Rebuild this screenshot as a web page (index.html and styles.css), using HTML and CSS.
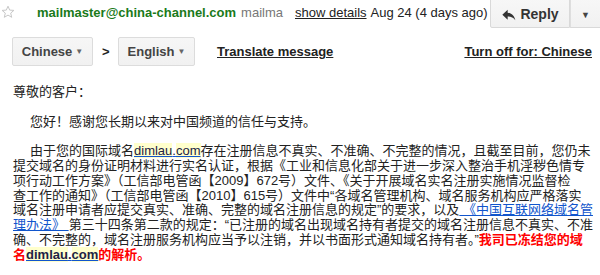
FILE: index.html
```html
<!DOCTYPE html>
<html>
<head>
<meta charset="utf-8">
<link rel="stylesheet" href="styles.css">
</head>
<body>
<div class="head">
  <svg class="star" viewBox="0 0 14 14" width="14" height="14"><path d="M7 1.2 L8.7 5.1 L12.9 5.4 L9.7 8.1 L10.7 12.3 L7 10.1 L3.3 12.3 L4.3 8.1 L1.1 5.4 L5.3 5.1 Z" fill="none" stroke="#c8c8c8" stroke-width="1"/></svg>
  <div class="meta">
    <span class="sender">mailmaster@china-channel.com</span>
    <span class="alias">mailma</span>
    <a class="details">show details</a>
    <span class="date">Aug 24 (4 days ago)</span>
  </div>
  <div class="replygroup">
    <div class="btn reply"><svg class="ricon" viewBox="0 0 24 24" width="16" height="16"><path d="M10 8.5V4l-8 7.5 8 7.5v-4.6c5.2 0 8.7 1.6 11.5 5.3-1-5.3-4.3-10.4-11.5-11.2z" fill="#333"/></svg><span>Reply</span></div>
    <div class="btn more">▼</div>
  </div>
</div>
<div class="tbar">
  <div class="sel sel-zh">Chinese <span class="caret">▼</span></div>
  <span class="gt">&gt;</span>
  <div class="sel sel-en">English <span class="caret">▼</span></div>
  <a class="tlink">Translate message</a>
  <a class="tlink off">Turn off for: Chinese</a>
</div>
<div class="msg">
  <div class="para">
    <div class="ln">尊敬的客户：</div>
  </div>
  <div class="para">
    <div class="ln ind">您好！感谢您长期以来对中国频道的信任与支持。</div>
  </div>
  <div class="para">
    <div class="ln ind">由于您的国际域名<a class="dom"><span class="hl">dimlau</span>.<span class="hl">com</span></a>存在注册信息不真实、不准确、不完整的情况，且截至目前，您仍未</div>
    <div class="ln">提交域名的身份证明材料进行实名认证，根据《工业和信息化部关于进一步深入整治手机淫秽色情专</div>
    <div class="ln">项行动工作方案》（工信部电管函【2009】672号）文件、《关于开展域名实名注册实施情况监督检</div>
    <div class="ln">查工作的通知》（工信部电管函【2010】615号）文件中“各域名管理机构、域名服务机构应严格落实</div>
    <div class="ln">域名注册申请者应提交真实、准确、完整的域名注册信息的规定”的要求，以及<a class="blue"> 《中国互联网络域名管</a></div>
    <div class="ln"><a class="blue">理办法》 </a>第三十四条第二款的规定：“已注册的域名出现域名持有者提交的域名注册信息不真实、不准</div>
    <div class="ln">确、不完整的，域名注册服务机构应当予以注销，并以书面形式通知域名持有者。”<b class="red">我司已冻结您的域</b></div>
    <div class="ln"><b class="red">名<a class="dom"><span class="hl">dimlau</span>.<span class="hl">com</span></a>的解析。</b></div>
  </div>
</div>
</body>
</html>
```
FILE: styles.css
```css
html, body {
  margin: 0;
  padding: 0;
  background: #fff;
  overflow: hidden;
}
body {
  width: 600px;
  height: 275px;
  font-family: "Liberation Sans", Arial, "Noto Sans CJK SC", sans-serif;
  font-size: 13px;
  color: #222;
}
.head {
  display: flex;
  align-items: center;
  height: 28px;
}
.star {
  margin-left: 1px;
  margin-bottom: 5px;
  flex: none;
}
.meta {
  display: flex;
  align-items: baseline;
  white-space: nowrap;
  padding-bottom: 4px;
  margin-left: 22px;
}
.sender {
  font-weight: bold;
  color: #1a7a1a;
}
.alias {
  color: #777;
  margin-left: 5px;
}
.details {
  color: #222;
  text-decoration: underline;
  margin-left: 12px;
}
.date {
  margin-left: 4px;
  color: #222;
}
.replygroup {
  display: flex;
  margin-left: auto;
  margin-right: -4px;
  margin-top: -2px;
  height: 30px;
}
.btn {
  box-sizing: border-box;
  height: 30px;
  display: flex;
  align-items: center;
  justify-content: center;
  border: 1px solid #d9d9d9;
  background: linear-gradient(#f7f7f7, #f1f1f1);
  color: #333;
  font-weight: bold;
}
.reply {
  width: 80px;
  border-radius: 0 0 0 2px;
  padding-top: 2px;
  font-size: 14px;
}
.reply span {
  margin-left: 3px;
}
.ricon {
  margin-top: 1px;
}
.more {
  width: 34px;
  border-left: 1px solid #dedede;
  font-size: 9px;
  padding-top: 3px;
  padding-right: 3px;
  color: #444;
}
.tbar {
  display: flex;
  align-items: center;
  margin-top: 9px;
  padding-left: 12px;
  height: 29px;
}
.sel {
  box-sizing: border-box;
  height: 29px;
  display: flex;
  align-items: center;
  justify-content: center;
  border: 1px solid #dcdcdc;
  border-radius: 2px;
  background: linear-gradient(#f6f6f6, #f1f1f1);
  color: #444;
  font-weight: bold;
  white-space: nowrap;
}
.sel-zh {
  width: 81px;
}
.sel-en {
  width: 77px;
}
.caret {
  font-size: 8px;
  margin-left: 3px;
  color: #666;
}
.gt {
  font-weight: bold;
  color: #222;
  margin: 0 9px 0 9px;
  width: 7px;
}
.tlink {
  font-weight: bold;
  color: #222;
  text-decoration: underline;
  margin-left: 22px;
  white-space: nowrap;
}
.tlink.off {
  margin-left: auto;
  margin-right: 8px;
}
.msg {
  margin-top: 19px;
  padding-left: 13px;
  line-height: 14.8px;
  font-size: 13px;
}
.para {
  margin-bottom: 14.8px;
}
.ln {
  white-space: nowrap;
}
.ln.ind {
  padding-left: 17px;
}
.dom {
  color: #222244;
  text-decoration: underline;
  text-decoration-color: #1155cc;
}
.hl {
  background: #ffffcc;
}
.blue {
  color: #1155cc;
  text-decoration: underline;
}
.red {
  color: #ff0000;
  font-weight: bold;
}
.red .dom {
  color: #222244;
}
```
